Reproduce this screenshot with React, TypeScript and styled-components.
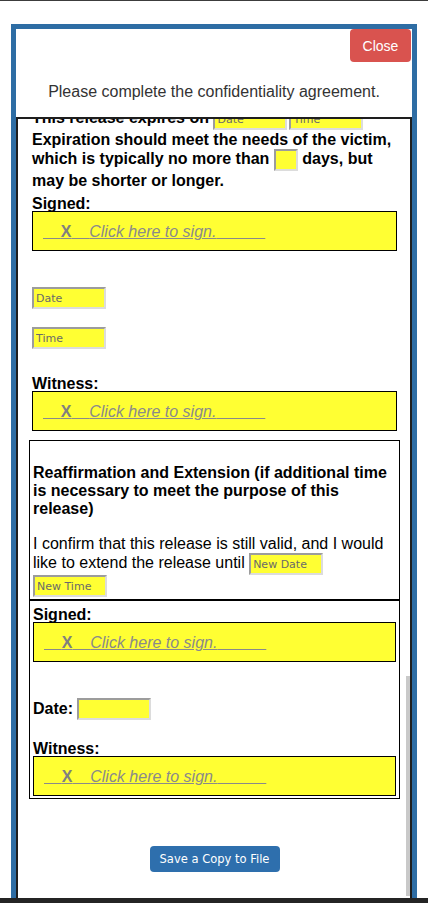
import React, { useLayoutEffect, useRef } from "react";
import styled, { createGlobalStyle } from "styled-components";

const GlobalStyle = createGlobalStyle`
  html, body { margin: 0; padding: 0; background: #fff; }
  body { font-family: "Liberation Sans", Arial, sans-serif; }
  * { box-sizing: border-box; }
`;

const Page = styled.div`
  height: 903px;
  display: flex;
  flex-direction: column;
  border-top: 1px solid #3c3c3c;
  background: #fff;
`;

const Modal = styled.div`
  flex: 1;
  min-height: 0;
  margin: 23px 11px 0;
  border: 5px solid #2e6da4;
  border-bottom: none;
  display: flex;
  flex-direction: column;
  background: #fff;
`;

const BottomBar = styled.div`
  height: 5px;
  flex-shrink: 0;
  background: #242424;
`;

const Header = styled.div`
  height: 88px;
  flex-shrink: 0;
  display: flex;
  flex-direction: column;
`;

const CloseRow = styled.div`
  display: flex;
  justify-content: flex-end;
  padding-right: 1px;
`;

const CloseButton = styled.button`
  width: 61px;
  height: 33px;
  padding: 0;
  border: none;
  border-radius: 4px;
  background: #d9534f;
  color: #fff;
  font: 14px "Liberation Sans", Arial, sans-serif;
  cursor: pointer;
`;

const Message = styled.p`
  margin: 21px 0 0;
  text-align: center;
  font-size: 16px;
  line-height: 18.4px;
  color: #333;
`;

const ScrollFrame = styled.div`
  position: relative;
  flex: 1;
  min-height: 0;
  border: 2px solid #1e1e1e;
  border-bottom: none;
`;

const Scroller = styled.div`
  height: 100%;
  overflow: hidden;
`;

const Thumb = styled.div`
  position: absolute;
  right: 0;
  bottom: 2px;
  width: 4px;
  height: 220px;
  background: #c9c9c9;
`;

const Content = styled.div`
  padding: 0 13px 26px 14px;
  color: #000;
`;

const Text = styled.p<{ $top?: number; $lh: number; $bold?: boolean }>`
  margin: ${(p) => p.$top ?? 0}px 0 0;
  font-size: 16px;
  font-weight: ${(p) => (p.$bold ? "bold" : "normal")};
  line-height: ${(p) => p.$lh}px;
`;

const Label = styled.div<{ $top?: number }>`
  margin-top: ${(p) => p.$top ?? 0}px;
  font-size: 16px;
  font-weight: bold;
  line-height: 14px;
`;

const Field = styled.input<{ $w?: number; $gap?: number }>`
  width: ${(p) => p.$w ?? 74}px;
  height: 22px;
  margin: 0 0 0 ${(p) => p.$gap ?? 0}px;
  padding: 0 2px;
  border: 2px solid;
  border-color: #9c9c9c #dcdcdc #dcdcdc #9c9c9c;
  background: #ffff33;
  font: 11px "DejaVu Sans", Verdana, sans-serif;
  color: #333;
  vertical-align: middle;
  outline: none;
  &::placeholder {
    color: #6a6a6a;
  }
`;

const FieldRow = styled.div<{ $top: number }>`
  display: flex;
  align-items: center;
  gap: 4px;
  margin-top: ${(p) => p.$top}px;
  font-size: 16px;
  font-weight: bold;
`;

const SignBox = styled.div`
  height: 40px;
  padding: 11px 10px 9px;
  border: 1px solid #000;
  background: #ffff33;
  font-size: 16px;
  line-height: 18px;
  cursor: pointer;
`;

const SignLine = styled.span`
  color: #8a8a8a;
  text-decoration: underline;
  white-space: pre;
`;

const Mark = styled.b`
  font-weight: bold;
  color: #808080;
`;

const Hint = styled.i`
  font-style: italic;
`;

const Box = styled.div`
  margin: 9px -3px 0;
  border: 1px solid #000;
`;

const Section = styled.div<{ $pad: string; $divider?: boolean }>`
  padding: ${(p) => p.$pad};
  border-bottom: ${(p) => (p.$divider ? "2px solid #000" : "none")};
`;

const Footer = styled.div`
  display: flex;
  justify-content: center;
  margin-top: 46.5px;
`;

const SaveButton = styled.button`
  width: 130px;
  height: 26px;
  padding: 0;
  border: none;
  border-radius: 4px;
  background: #2e6fad;
  color: #fff;
  font: 12.8px "DejaVu Sans Condensed", "DejaVu Sans", Verdana, sans-serif;
  cursor: pointer;
`;

const Signature: React.FC = () => (
  <SignBox>
    <SignLine>
      {"\u00a0\u00a0\u00a0\u00a0"}
      <Mark>X</Mark>
      {"\u00a0\u00a0\u00a0\u00a0"}
      <Hint>Click here to sign.</Hint>
      {"\u00a0".repeat(11)}
    </SignLine>
  </SignBox>
);

export default function App(): JSX.Element {
  const scroller = useRef<HTMLDivElement>(null);

  useLayoutEffect(() => {
    const el = scroller.current;
    if (el) el.scrollTop = el.scrollHeight - el.clientHeight;
  }, []);

  return (
    <>
      <GlobalStyle />
      <Page>
        <Modal>
          <Header>
            <CloseRow>
              <CloseButton>Close</CloseButton>
            </CloseRow>
            <Message>Please complete the confidentiality agreement.</Message>
          </Header>
          <ScrollFrame>
            <Scroller ref={scroller}>
              <Content>
                <Text $bold $lh={19}>
                  This release expires on <Field placeholder="Date" />
                  <Field placeholder="Time" $gap={2} />
                  <br />
                  Expiration should meet the needs of the victim, which is typically no more than{" "}
                  <Field $w={24} /> days, but may be shorter or longer.
                </Text>
                <Label $top={7}>Signed:</Label>
                <Signature />
                <FieldRow $top={36}>
                  <Field placeholder="Date" />
                </FieldRow>
                <FieldRow $top={18}>
                  <Field placeholder="Time" />
                </FieldRow>
                <Label $top={28}>Witness:</Label>
                <Signature />
                <Box>
                  <Section $pad="23px 3px 2px" $divider>
                    <Text $bold $lh={18}>
                      Reaffirmation and Extension (if additional time is necessary to meet the purpose of this release)
                    </Text>
                    <Text $top={16} $lh={19}>
                      I confirm that this release is still valid, and I would like to extend the release until{" "}
                      <Field placeholder="New Date" /> <Field placeholder="New Time" />
                    </Text>
                  </Section>
                  <Section $pad="3px 3px 2px">
                    <Label $top={4}>Signed:</Label>
                    <Signature />
                    <FieldRow $top={36}>
                      Date:
                      <Field />
                    </FieldRow>
                    <Label $top={22}>Witness:</Label>
                    <Signature />
                  </Section>
                </Box>
                <Footer>
                  <SaveButton>Save a Copy to File</SaveButton>
                </Footer>
              </Content>
            </Scroller>
            <Thumb />
          </ScrollFrame>
        </Modal>
        <BottomBar />
      </Page>
    </>
  );
}
